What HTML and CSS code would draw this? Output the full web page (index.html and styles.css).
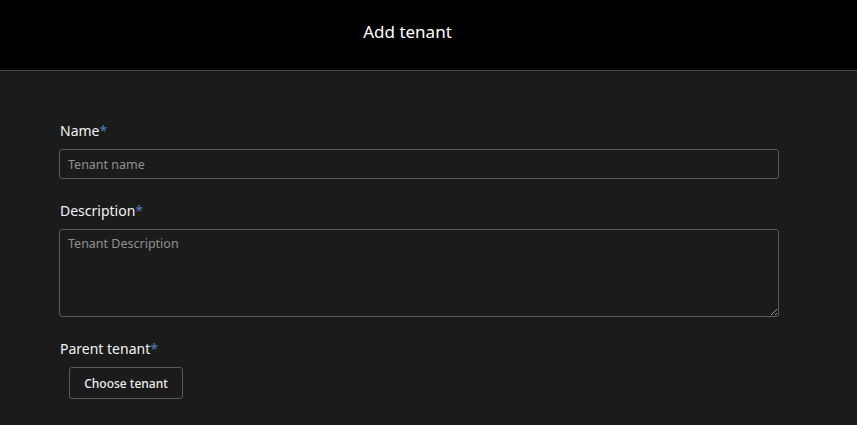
FILE: index.html
```html
<!DOCTYPE html>
<html>
<head>
<meta charset="utf-8">
<link rel="stylesheet" href="styles.css">
</head>
<body>
<header class="header"><h1 class="title">Add tenant</h1></header>
<main class="form">
  <div class="field">
    <label class="label">Name<span class="req">*</span></label>
    <input class="input" type="text" placeholder="Tenant name">
  </div>
  <div class="field">
    <label class="label">Description<span class="req">*</span></label>
    <textarea class="textarea" placeholder="Tenant Description"></textarea>
  </div>
  <div class="field">
    <label class="label">Parent tenant<span class="req">*</span></label>
    <div class="btn-row"><button class="btn" type="button">Choose tenant</button></div>
  </div>
</main>
</body>
</html>
```
FILE: styles.css
```css
html, body { margin: 0; padding: 0; }
body {
  background: #1b1b1b;
  font-family: "Noto Sans", "Open Sans", sans-serif;
  color: #f2f2f2;
  height: 425px;
  overflow: hidden;
}
.header {
  height: 70px;
  background: #000;
  border-bottom: 1px solid #444;
  display: flex;
  align-items: center;
  justify-content: center;
  padding-right: 42px;
}
.title {
  margin: 0;
  font-size: 17px;
  font-weight: 400;
  color: #fff;
  padding-bottom: 7px;
}
.form {
  padding: 49px 78px 0 59px;
  display: flex;
  flex-direction: column;
  gap: 21px;
}
.field { display: flex; flex-direction: column; }
.label {
  font-size: 14px;
  line-height: 20px;
  margin-bottom: 9px;
  padding-top: 1px;
  color: #f2f2f2;
  padding-left: 1px;
  height: 19px;
}
.req { color: #4a7fc1; }
.input, .textarea {
  box-sizing: border-box;
  width: 720px;
  background: #1b1b1b;
  border: 1px solid #5a5a5a;
  border-radius: 3px;
  color: #ddd;
  font-family: inherit;
  font-size: 12.5px;
  padding: 0 8px;
  outline: none;
  margin: 0;
}
.input { height: 30px; }
.textarea { height: 88px; padding-top: 5px; resize: vertical; display: block; margin-top: 0; }
.input::placeholder, .textarea::placeholder { color: #909090; }
.btn-row { padding-left: 10px; padding-top: 0; }
.btn {
  background: #1b1b1b;
  border: 1px solid #5a5a5a;
  border-radius: 3px;
  color: #ececec;
  font-family: inherit;
  font-size: 12px;
  font-weight: 500;
  height: 32px;
  width: 114px;
  padding: 0;
}
```
